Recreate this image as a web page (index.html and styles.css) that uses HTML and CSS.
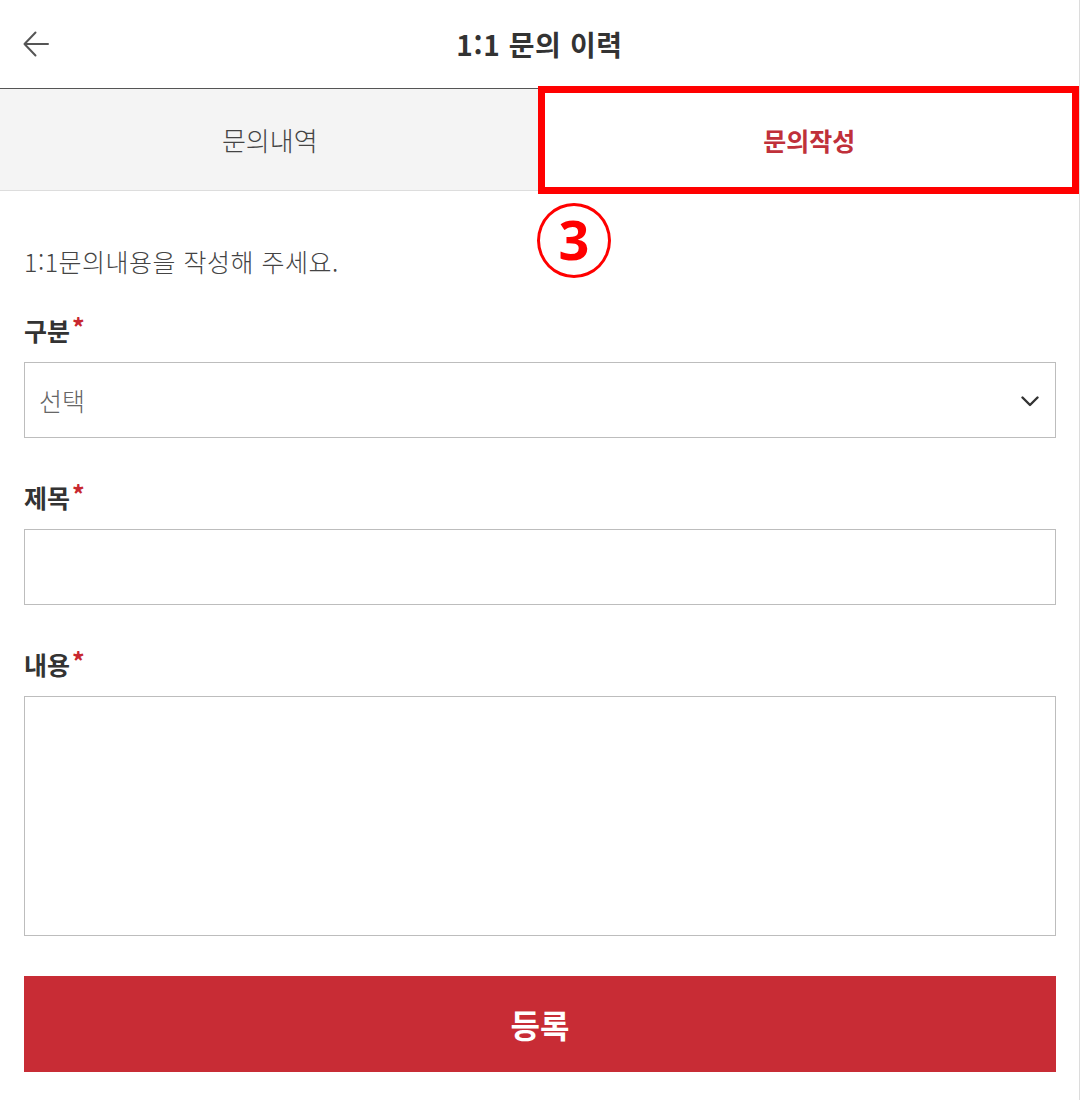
FILE: index.html
```html
<!DOCTYPE html>
<html lang="ko">
<head>
<meta charset="utf-8">
<title>1:1 문의 이력</title>
<link rel="stylesheet" href="styles.css">
</head>
<body>
<div class="page">
  <header class="header">
    <button class="back" aria-label="뒤로">
      <svg width="26" height="26" viewBox="0 0 26 26" fill="none" stroke="#555" stroke-width="2" stroke-linecap="round" stroke-linejoin="round"><path d="M25 13H1.5M12.5 1.5L1.5 13L12.5 24.5"/></svg>
    </button>
    <h1 class="title">1:1 문의 이력</h1>
  </header>
  <nav class="tabs">
    <div class="tab">문의내역</div>
    <div class="tab active">문의작성</div>
  </nav>
  <main class="form">
    <p class="intro">1:1문의내용을 작성해 주세요.</p>
    <div class="field">
      <div class="label">구분<span class="req">*</span></div>
      <div class="select">
        <span class="placeholder">선택</span>
        <svg class="chev" width="18" height="11" viewBox="0 0 18 11" fill="none" stroke="#333" stroke-width="2.4" stroke-linecap="round" stroke-linejoin="round"><path d="M1.5 1.5L9 9L16.5 1.5"/></svg>
      </div>
    </div>
    <div class="field">
      <div class="label">제목<span class="req">*</span></div>
      <div class="input"></div>
    </div>
    <div class="field">
      <div class="label">내용<span class="req">*</span></div>
      <div class="textarea"></div>
    </div>
    <button class="submit">등록</button>
  </main>
  <div class="mark-box"></div>
  <div class="mark-num">3</div>
</div>
</body>
</html>
```
FILE: styles.css
```css
* { box-sizing: border-box; }
html, body { margin: 0; padding: 0; background: #fff; }
body {
  font-family: "Noto Sans CJK KR", "Noto Sans", sans-serif;
  color: #333;
}
.page {
  position: relative;
  width: 1080px;
  min-height: 1100px;
  border-right: 1px solid #dcdcdc;
}
.header {
  height: 89px;
  border-bottom: 1px solid #555;
  display: flex;
  align-items: center;
  justify-content: center;
  position: relative;
}
.back {
  position: absolute;
  left: 23px;
  top: 31px;
  padding: 0;
  border: 0;
  background: none;
  width: 26px;
  height: 26px;
  display: flex;
}
.title {
  margin: 0;
  font-size: 28px;
  font-weight: 700;
  color: #333;
  line-height: 1;
  letter-spacing: 0.6px;
}
.tabs {
  display: flex;
  height: 102px;
  border-bottom: 1px solid #ddd;
}
.tab {
  flex: 1;
  display: flex;
  align-items: center;
  justify-content: center;
  font-size: 26px;
  font-weight: 300;
  color: #444;
  background: #f4f4f4;
}
.tab.active {
  background: #fff;
  color: #c0303a;
  font-weight: 700;
  font-size: 25px;
}
.form {
  padding: 54px 23px 0 24px;
  display: flex;
  flex-direction: column;
}
.intro {
  margin: 0 0 37px;
  font-size: 25px;
  line-height: 32px;
  font-weight: 300;
  color: #444;
  letter-spacing: 0.5px;
}
.field {
  display: flex;
  flex-direction: column;
  gap: 16px;
  margin-bottom: 43px;
}
.label {
  font-size: 25px;
  line-height: 32px;
  font-weight: 700;
  color: #333;
}
.req {
  color: #c8282f;
  margin-left: 2px;
  position: relative;
  top: -4px;
}
.select, .input, .textarea {
  border: 1px solid #bdbdbd;
  background: #fff;
}
.select {
  height: 76px;
  display: flex;
  align-items: center;
  justify-content: space-between;
  padding: 0 16px 0 14px;
}
.placeholder {
  font-size: 25px;
  font-weight: 300;
  color: #666;
}
.chev { margin-top: 2px; }
.input { height: 76px; }
.textarea { height: 240px; }
.field:last-of-type { margin-bottom: 40px; }
.submit {
  height: 96px;
  border: 0;
  background: #c82c35;
  color: #fff;
  font-family: inherit;
  font-size: 32px;
  font-weight: 700;
  padding: 0;
}
.mark-box {
  position: absolute;
  left: 538px;
  top: 86px;
  width: 541px;
  height: 108px;
  border: 7px solid #ff0000;
}
.mark-num {
  position: absolute;
  left: 537px;
  top: 203px;
  width: 74px;
  height: 75px;
  border: 3.5px solid #ff0000;
  border-radius: 50%;
  color: #ff0000;
  font-family: "Noto Sans", sans-serif;
  font-weight: 700;
  font-size: 54px;
  line-height: 66px;
  text-align: center;
}
```
